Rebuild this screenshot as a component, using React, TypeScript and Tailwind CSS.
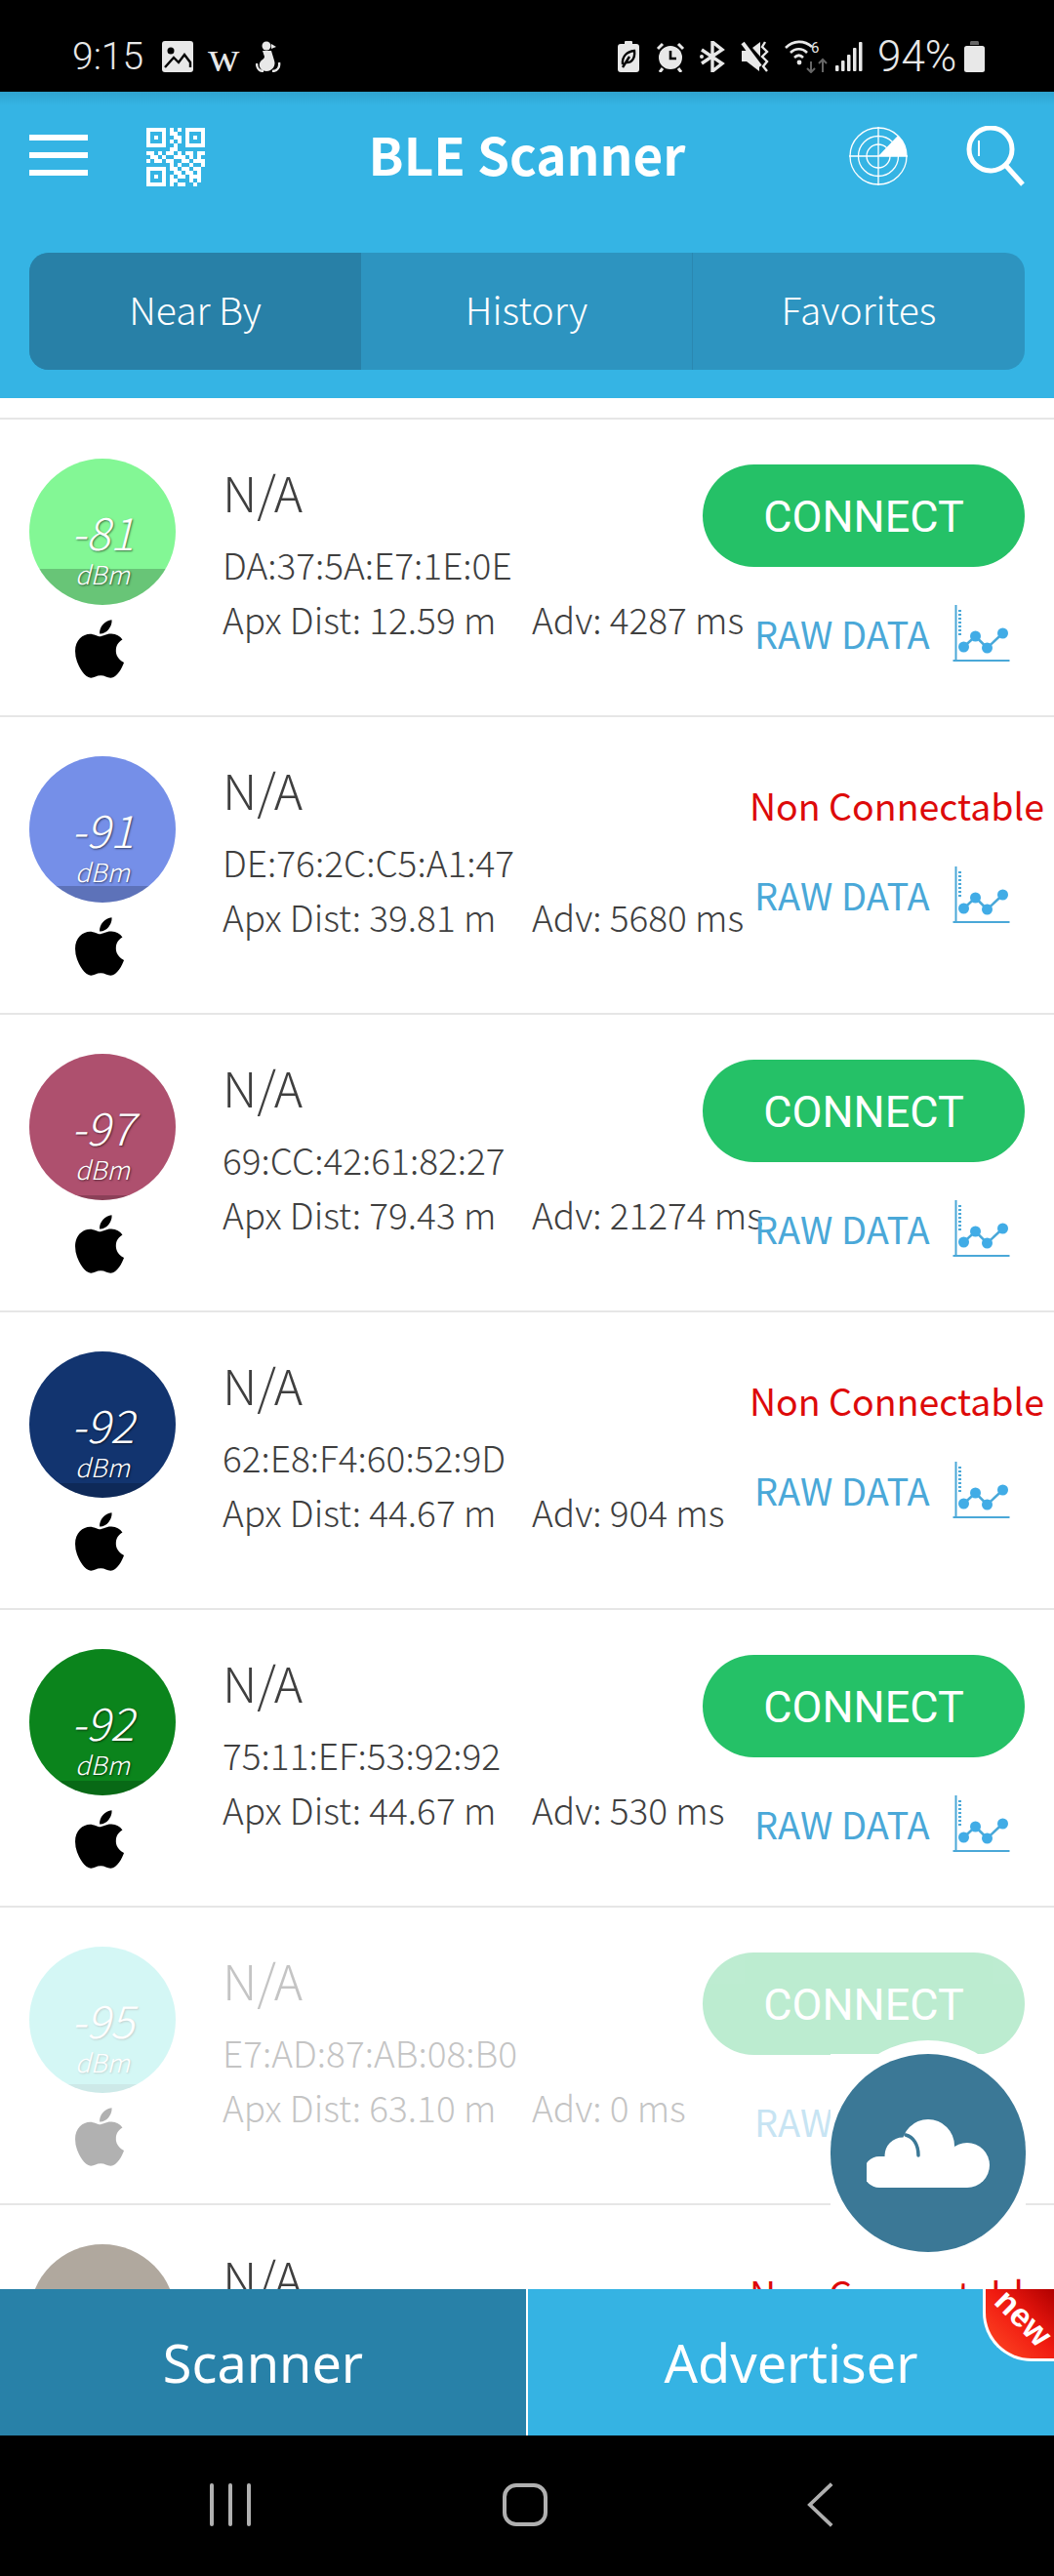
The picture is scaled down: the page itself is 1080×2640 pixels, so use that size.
import { FaApple } from "react-icons/fa";

interface Device {
  rssi: string;
  color: string;
  band: string;
  mac: string;
  dist: string;
  adv: string;
  connectable: boolean;
  faded?: boolean;
}

const devices: Device[] = [
  { rssi: "-81", color: "bg-[#83f795]", band: "h-[37px]", mac: "DA:37:5A:E7:1E:0E", dist: "12.59", adv: "4287", connectable: true },
  { rssi: "-91", color: "bg-[#758fe8]", band: "h-[17px]", mac: "DE:76:2C:C5:A1:47", dist: "39.81", adv: "5680", connectable: false },
  { rssi: "-97", color: "bg-[#ae506e]", band: "h-[5px]", mac: "69:CC:42:61:82:27", dist: "79.43", adv: "21274", connectable: true },
  { rssi: "-92", color: "bg-[#12346f]", band: "h-[15px]", mac: "62:E8:F4:60:52:9D", dist: "44.67", adv: "904", connectable: false },
  { rssi: "-92", color: "bg-[#0b841c]", band: "h-[15px]", mac: "75:11:EF:53:92:92", dist: "44.67", adv: "530", connectable: true },
  { rssi: "-95", color: "bg-[#73e8e1]", band: "h-[9px]", mac: "E7:AD:87:AB:08:B0", dist: "63.10", adv: "0", connectable: true, faded: true },
  { rssi: "-90", color: "bg-[#b0a89e]", band: "h-[17px]", mac: "4C:21:9A:07:3B:D2", dist: "31.62", adv: "812", connectable: false },
];

const qrRows = [
  "111110101011111",
  "100010110010001",
  "101010011010101",
  "100010101010001",
  "111110010011111",
  "000000110000000",
  "110101101011011",
  "011010011101010",
  "101101100110111",
  "000000101001001",
  "111110110110110",
  "100010011011010",
  "101010101101110",
  "100010110001010",
  "111110101100100",
];

const sans = "font-['Noto_Sans_CJK_JP','Noto_Sans',sans-serif]";

const ChartIcon = () => (
  <svg width="61" height="60" viewBox="0 0 58 60" className="shrink-0">
    <path d="M3 0V58M0 57H58" stroke="#4aa8d8" strokeWidth="2" fill="none" />
    <path d="M7 5V31" stroke="#4aa8d8" strokeWidth="3" strokeDasharray="2 2" fill="none" />
    <path d="M11 43L23 32L35 44L51 29" stroke="#4aa8d8" strokeWidth="2.5" fill="none" />
    <circle cx="11" cy="43" r="5.5" fill="#41ace6" />
    <circle cx="23" cy="32" r="5.5" fill="#41ace6" />
    <circle cx="35" cy="44" r="5.5" fill="#41ace6" />
    <circle cx="51" cy="29" r="5.5" fill="#41ace6" />
  </svg>
);

const DeviceRow = ({ device }: { device: Device }) => (
  <div className="h-[305px] shrink-0 border-b-2 border-[#e6e6e6] bg-white">
    <div className={`flex h-full pl-[30px] pr-[30px] ${device.faded ? "opacity-30" : ""}`}>
      {/* rssi + vendor */}
      <div className="flex w-[150px] shrink-0 flex-col items-center pt-[40px]">
        <div className={`relative h-[150px] w-[150px] overflow-hidden rounded-full ${device.color}`}>
          <div className={`absolute inset-x-0 bottom-0 bg-black/20 ${device.band}`} />
          <div className={`relative flex flex-col items-center italic font-light text-white [text-shadow:1px_1px_2px_rgba(0,0,0,0.55)] ${sans}`}>
            <span className="mt-[48px] h-[52px] text-[46px] leading-[52px]">{device.rssi}</span>
            <span className="h-[36px] text-[26px] leading-[36px]">dBm</span>
          </div>
        </div>
        <FaApple size={68} className="-ml-[6px] mt-[11px] text-black" />
      </div>

      {/* device info */}
      <div className={`ml-[48px] w-[492px] shrink-0 whitespace-nowrap font-light text-[#3f3f3f] ${sans}`}>
        <div className="mt-[43px] h-[60px] text-[50px] leading-[60px]">N/A</div>
        <div className="mt-[20px] h-[50px] text-[37px] leading-[50px]">{device.mac}</div>
        <div className="mt-[6px] flex h-[50px] text-[37px] leading-[50px]">
          <span className="w-[317px] shrink-0">Apx Dist: {device.dist} m</span>
          <span>Adv: {device.adv} ms</span>
        </div>
      </div>

      {/* actions */}
      <div className={`flex w-[330px] shrink-0 flex-col items-start ${device.connectable ? "pt-[46px]" : "pt-[65px]"}`}>
        {device.connectable ? (
          <button className="flex h-[105px] w-[330px] items-center justify-center rounded-full bg-[#25c167] pt-[2px] font-['Roboto',sans-serif] text-[45px] text-white">
            CONNECT
          </button>
        ) : (
          <div className={`ml-[48px] h-[50px] whitespace-nowrap text-[37.5px] leading-[50px] text-[#dd0a0a] ${sans}`}>
            Non Connectable
          </div>
        )}
        <div className={`ml-[53px] flex h-[60px] items-center gap-[22px] ${device.connectable ? "mt-[39px]" : "mt-[38px]"}`}>
          <span className={`whitespace-nowrap pb-[4px] text-[38px] text-[#4aa8d8] ${sans}`}>RAW DATA</span>
          <ChartIcon />
        </div>
      </div>
    </div>
  </div>
);

const StatusBar = () => (
  <div className="relative flex h-[94px] shrink-0 items-center justify-between bg-black pl-[74px] pr-[71px] pt-[22px] text-[#e8e8e8]">
    <div className="flex items-center">
      <span className="font-['Roboto',sans-serif] text-[39px] font-light leading-[44px]">9:15</span>
      <svg width="32" height="32" viewBox="0 0 32 32" className="ml-[19px]">
        <rect width="32" height="32" rx="3" fill="#e8e8e8" />
        <circle cx="9" cy="10" r="3.5" fill="#000" />
        <path d="M3 27L12 17L17 22L23 14L29 22V27" fill="none" stroke="#000" strokeWidth="2.4" />
      </svg>
      <span className="ml-[15px] font-['Liberation_Serif',serif] text-[45px] leading-[40px]">w</span>
      <svg width="26" height="32" viewBox="0 0 26 32" className="ml-[16px]">
        <circle cx="11" cy="5" r="4.5" fill="#e8e8e8" />
        <path d="M16 3L21 6L16 8Z" fill="#e8e8e8" />
        <path d="M7 10H16L19 20C21 25 17 31 11 31C6 31 3 27 4 23C5 19 9 19 9 16Z" fill="#e8e8e8" />
        <path d="M1 23C1 29 5 31 8 31M24 22C25 27 22 31 17 31" fill="none" stroke="#e8e8e8" strokeWidth="2.4" />
      </svg>
    </div>
    <div className="flex items-center">
      <svg width="22" height="32" viewBox="0 0 22 32">
        <rect x="7" width="8" height="4" rx="1" fill="#e8e8e8" />
        <rect y="3" width="22" height="29" rx="3" fill="#e8e8e8" />
        <path d="M5 24C4 15 10 11 17 10C18 18 14 23 8 22M5 27L12 16" fill="none" stroke="#000" strokeWidth="2.4" />
      </svg>
      <svg width="30" height="32" viewBox="0 0 30 32" className="ml-[17px]">
        <circle cx="15" cy="17" r="12" fill="#e8e8e8" />
        <path d="M15 10V18H21" fill="none" stroke="#000" strokeWidth="2.6" />
        <path d="M2 8L7 3M23 3L28 8M7 28L4 32M23 28L26 32" stroke="#e8e8e8" strokeWidth="3" />
      </svg>
      <svg width="28" height="32" viewBox="0 0 28 32" className="ml-[14px]">
        <path d="M3 9L24 23L14 31V1L24 9L3 23" fill="none" stroke="#e8e8e8" strokeWidth="3.4" />
        <circle cx="3" cy="16" r="2" fill="#e8e8e8" />
      </svg>
      <svg width="30" height="32" viewBox="0 0 30 32" className="ml-[15px]">
        <path d="M1 10H7L19 24V31L6 21H1Z" fill="#e8e8e8" />
        <path d="M2 2L20 26" stroke="#e8e8e8" strokeWidth="4" />
        <path d="M12 7L20 1V16Z" fill="#e8e8e8" />
        <path d="M25 1L22 6L27 11L22 16L27 21L23 26L27 31" fill="none" stroke="#e8e8e8" strokeWidth="2.4" />
      </svg>
      <svg width="44" height="34" viewBox="0 0 44 34" className="ml-[15px]">
        <path d="M1 8C9 0 20 0 28 7M6 13C11 8 18 8 23 13M10 18C13 15 16 15 19 18" fill="none" stroke="#e8e8e8" strokeWidth="2.6" />
        <circle cx="15" cy="23" r="2.4" fill="#e8e8e8" />
        <text x="27" y="13" fontSize="15" fill="#e8e8e8" fontFamily="Roboto">6</text>
        <path d="M27 22V33M23 29L27 33L31 29" fill="none" stroke="#666" strokeWidth="2" />
        <path d="M39 33V20M35 24L39 20L43 24" fill="none" stroke="#666" strokeWidth="2" />
      </svg>
      <svg width="28" height="32" viewBox="0 0 28 32" className="ml-[8px]">
        <rect x="0" y="25" width="3.5" height="6" rx="1" fill="#e8e8e8" />
        <rect x="6" y="20" width="3.5" height="11" rx="1" fill="#e8e8e8" />
        <rect x="12" y="14" width="3.5" height="17" rx="1" fill="#e8e8e8" />
        <rect x="18" y="7" width="3.5" height="24" rx="1" fill="#e8e8e8" />
        <rect x="24" y="1" width="3.5" height="30" rx="1" fill="#e8e8e8" />
      </svg>
      <span className="ml-[15px] w-[81px] whitespace-nowrap font-['Roboto',sans-serif] text-[44px] font-light leading-[44px]">94%</span>
      <svg width="21" height="32" viewBox="0 0 21 32" className="ml-[8px]">
        <path d="M6 4V1.5C6 .7 6.700 0 7.500 0H13.500C14.300 0 15 .7 15 1.500V4Z" fill="#666" />
        <rect y="5" width="21" height="27" rx="2.500" fill="#e8e8e8" />
      </svg>
    </div>
  </div>
);

const Header = () => (
  <div className="h-[314px] shrink-0 bg-[linear-gradient(#2fa3cf,#35b4e4_14px)] px-[30px]">
    <div className="flex h-[97px] items-end justify-between">
      <div className="flex items-center">
        <div className="flex w-[60px] flex-col gap-[12px] pb-[4px]">
          <div className="h-[6px] bg-white" />
          <div className="h-[6px] bg-white" />
          <div className="h-[6px] bg-white" />
        </div>
        <svg width="60" height="60" viewBox="0 0 15 15" className="ml-[60px]" shapeRendering="crispEdges">
          {qrRows.map((row, y) =>
            row.split("").map((cell, x) => (cell === "1" ? <rect key={`${x}-${y}`} x={x} y={y} width="1" height="1" fill="#fff" /> : null))
          )}
        </svg>
      </div>
      <div className="flex items-center">
        <svg width="60" height="60" viewBox="0 0 60 60">
          <g fill="none" stroke="#fff" strokeWidth="1.300">
            <circle cx="30" cy="30" r="29" />
            <circle cx="30" cy="30" r="20.500" />
            <circle cx="30" cy="30" r="12" />
            <path d="M30 0V60M0 30H60" />
          </g>
          <path d="M30 30H59C59 22 55 14 50 9Z" fill="#fff" />
        </svg>
        <svg width="60" height="62" viewBox="0 0 60 62" className="ml-[60px]">
          <circle cx="25" cy="24" r="22" fill="none" stroke="#fff" strokeWidth="5" />
          <path d="M41 41L58 60" stroke="#fff" strokeWidth="5" />
          <path d="M13 15V31" stroke="#fff" strokeWidth="2" />
        </svg>
      </div>
    </div>
    <div className={`-mt-[64px] text-center text-[53px] font-bold leading-[60px] text-white ${sans}`}>BLE Scanner</div>
    <div className={`mt-[72px] flex h-[120px] overflow-hidden rounded-[20px] bg-[#2d94c0] text-[39px] font-light text-white ${sans}`}>
      <div className="flex w-[340px] items-center justify-center bg-[#2880a7] pb-[6px]">Near By</div>
      <div className="flex w-[339px] items-center justify-center pb-[6px]">History</div>
      <div className="flex w-[341px] items-center justify-center border-l border-[#2a87b0] pb-[6px]">Favorites</div>
    </div>
  </div>
);

const BottomTabs = () => (
  <div className="relative flex h-[150px] shrink-0 font-['Noto_Sans',sans-serif] text-[54px] text-white">
    <div className="flex w-[539px] items-center justify-center bg-[#2881a8]">Scanner</div>
    <div className="w-[2px] bg-white" />
    <div className="flex flex-1 items-center justify-center bg-[#35b3e3]">Advertiser</div>
    <div className="absolute right-0 top-0 h-[74px] w-[73px] overflow-hidden rounded-bl-[50px] border-b-[3px] border-l-[3px] border-white bg-[linear-gradient(225deg,#b00000,#f01a10_45%,#ff4d26)]">
      <span className="absolute left-[6px] top-[12px] rotate-45 font-['Liberation_Sans',sans-serif] text-[34px] font-bold leading-[34px] text-white">new</span>
    </div>
  </div>
);

const NavBar = () => (
  <div className="flex h-[144px] shrink-0 items-center bg-black pb-[2px]">
    <div className="ml-[215px] flex gap-[15px]">
      <div className="h-[44px] w-[4px] rounded-full bg-[#b0b0b0]" />
      <div className="h-[44px] w-[4px] rounded-full bg-[#b0b0b0]" />
      <div className="h-[44px] w-[4px] rounded-full bg-[#b0b0b0]" />
    </div>
    <div className="ml-[258px] h-[44px] w-[46px] rounded-[14px] border-[4px] border-[#b0b0b0]" />
    <svg width="28" height="50" viewBox="0 0 30 50" className="ml-[266px]">
      <path d="M27 2L3 25L27 48" fill="none" stroke="#b0b0b0" strokeWidth="4" />
    </svg>
  </div>
);

const CloudButton = () => (
  <div className="absolute left-[851px] top-[2105px] h-[203px] w-[200px] bg-white">
    <div className="flex h-[203px] w-[200px] items-center justify-center rounded-full bg-[#3b7896] shadow-[0_-13px_0_1px_#fff]">
      <svg width="126" height="70" viewBox="0 0 126 70">
        <g fill="#fff">
          <circle cx="13" cy="54" r="16" />
          <circle cx="37" cy="37" r="18.500" />
          <circle cx="63" cy="27" r="27" />
          <circle cx="103" cy="47" r="23" />
          <rect x="13" y="38" width="90" height="32" />
        </g>
        <path d="M40 16C48 18 53 26 53 37" fill="none" stroke="#3b7896" strokeWidth="3.500" strokeLinecap="round" />
      </svg>
    </div>
  </div>
);

const App = () => {
  return (
    <div className="relative flex h-[2640px] w-[1080px] flex-col overflow-hidden bg-white">
      <StatusBar />
      <Header />
      <div className="flex min-h-0 flex-1 flex-col overflow-hidden bg-white pt-[20px]">
        <div className="h-[2px] shrink-0 bg-[#e6e6e6]" />
        {devices.map((device) => (
          <DeviceRow key={device.mac} device={device} />
        ))}
      </div>
      <BottomTabs />
      <NavBar />
      <CloudButton />
    </div>
  );
};

export default App;
